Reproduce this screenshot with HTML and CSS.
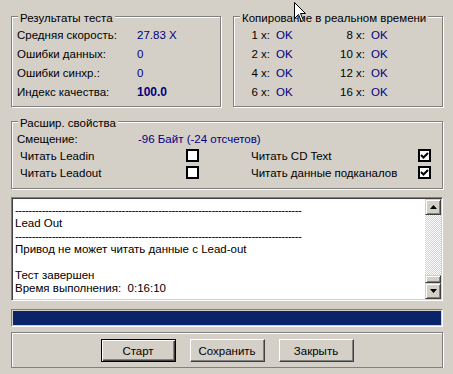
FILE: index.html
```html
<!DOCTYPE html>
<html>
<head>
    <meta charset="utf-8">
    <title>Результаты теста</title>
    <link rel="stylesheet" href="styles.css">
</head>
<body>
    <div class="dialog">
        <div class="top-row">
            <fieldset class="group group-half">
                <legend>Результаты теста</legend>
                <div class="stats">
                    <span>Средняя скорость:</span><span class="val">27.83 X</span>
                    <span>Ошибки данных:</span><span class="val">0</span>
                    <span>Ошибки синхр.:</span><span class="val">0</span>
                    <span>Индекс качества:</span><span class="val val-bold">100.0</span>
                </div>
            </fieldset>
            <fieldset class="group group-half">
                <legend>Копирование в реальном времени</legend>
                <div class="speeds">
                    <span class="spd">1 x:</span><span class="ok">OK</span><span class="spd">8 x:</span><span class="ok">OK</span>
                    <span class="spd">2 x:</span><span class="ok">OK</span><span class="spd">10 x:</span><span class="ok">OK</span>
                    <span class="spd">4 x:</span><span class="ok">OK</span><span class="spd">12 x:</span><span class="ok">OK</span>
                    <span class="spd">6 x:</span><span class="ok">OK</span><span class="spd">16 x:</span><span class="ok">OK</span>
                </div>
            </fieldset>
        </div>

        <fieldset class="group group-full">
            <legend>Расшир. свойства</legend>
            <div class="offset-row">
                <span class="offset-label">Смещение:</span><span class="val">-96 Байт (-24 отсчетов)</span>
            </div>
            <div class="options">
                <span class="opt">Читать Leadin</span><span class="check"></span><span></span>
                <span class="opt opt-right">Читать CD Text</span>
                <span class="check"><svg width="9" height="9" viewBox="0 0 9 9"><path d="M1 4 L3.5 6.5 L8 2" fill="none" stroke="#000" stroke-width="2"/></svg></span>
                <span class="opt">Читать Leadout</span><span class="check"></span><span></span>
                <span class="opt opt-right">Читать данные подканалов</span>
                <span class="check"><svg width="9" height="9" viewBox="0 0 9 9"><path d="M1 4 L3.5 6.5 L8 2" fill="none" stroke="#000" stroke-width="2"/></svg></span>
            </div>
        </fieldset>

        <div class="log">
            <div class="log-text">
                <div class="rule">--------------------------------------------------------------------------------------</div>
                <div>Lead Out</div>
                <div class="rule">--------------------------------------------------------------------------------------</div>
                <div>Привод не может читать данные с Lead-out</div>
                <div>&nbsp;</div>
                <div>Тест завершен</div>
                <div class="keep-spaces">Время выполнения:  0:16:10</div>
            </div>
            <div class="scrollbar">
                <div class="sb-btn"><svg width="7" height="4" viewBox="0 0 7 4"><path d="M3.5 0 L7 4 L0 4 Z" fill="#000"/></svg></div>
                <div class="sb-track"></div>
                <div class="sb-thumb"></div>
                <div class="sb-btn"><svg width="7" height="4" viewBox="0 0 7 4"><path d="M0 0 L7 0 L3.5 4 Z" fill="#000"/></svg></div>
            </div>
        </div>

        <div class="progress"><div class="progress-fill"></div></div>

        <div class="buttons">
            <button class="btn btn-default">Старт</button>
            <button class="btn">Сохранить</button>
            <button class="btn">Закрыть</button>
        </div>
    </div>

    <svg class="cursor" width="13" height="21" viewBox="0 0 13 21">
        <polygon points="0.5,0.5 0.5,16.5 4.5,12.5 7.5,19.5 9.5,18.5 6.5,11.5 11.5,11.5" fill="#fff" stroke="#000" stroke-width="1"/>
    </svg>
</body>
</html>
```

FILE: styles.css
```css
body {
    margin: 0;
    background-color: #d4d0c8;
    font-family: "Liberation Sans", Arial, sans-serif;
    font-size: 11.5px;
    line-height: 14px;
    color: #000;
    overflow: hidden;
}
.dialog {
    width: 432px;
    padding: 7px 10px 0 11px;
}
.top-row {
    display: flex;
    gap: 12px;
}
.group {
    margin: 0;
    min-width: 0;
    padding: 0 5px 5px;
    border: 1px solid #808080;
    box-shadow: 1px 1px 0 #fff, inset 1px 1px 0 #fff;
    box-sizing: border-box;
}
.group legend {
    padding: 4px 2px 0;
    margin-left: 1px;
    background-color: #d4d0c8;
    line-height: 14px;
}
.group-half {
    width: 210px;
}
.group-full {
    width: 432px;
    margin-top: 5px;
    padding-bottom: 7px;
}
.stats {
    display: grid;
    grid-template-columns: 120px 1fr;
    grid-auto-rows: 19px;
    align-items: center;
}
.val {
    color: #000080;
}
.val-bold {
    font-weight: bold;
    font-size: 12px;
}
.speeds {
    display: grid;
    grid-template-columns: 31px 52px 43px 1fr;
    grid-auto-rows: 19px;
    align-items: center;
}
.spd {
    text-align: right;
}
.ok {
    color: #000080;
    padding-left: 6px;
}
.offset-row {
    display: flex;
    align-items: center;
    height: 17px;
}
.offset-label {
    width: 121px;
}
.options {
    display: grid;
    grid-template-columns: 169px 13px 52px 167px 13px;
    grid-auto-rows: 17px;
    align-items: center;
}
.opt {
    padding-left: 3px;
}
.opt-right {
    padding-left: 0;
}
.check {
    width: 13px;
    height: 13px;
    box-sizing: border-box;
    border: 2px solid #000;
    background-color: #fff;
    display: flex;
    align-items: center;
    justify-content: center;
}
.log {
    margin-top: 8px;
    height: 104px;
    box-sizing: border-box;
    display: flex;
    padding: 1px;
    background-color: #fff;
    border: 1px solid;
    border-color: #808080 #fff #fff #808080;
    box-shadow: inset 1px 1px 0 #404040, inset -1px -1px 0 #d4d0c8;
}
.log-text {
    flex: 1;
    overflow: hidden;
    padding: 5px 0 0 2px;
    line-height: 13px;
    white-space: nowrap;
}
.keep-spaces {
    white-space: pre;
}
.rule {
    letter-spacing: -0.5px;
}
.scrollbar {
    width: 16px;
    display: flex;
    flex-direction: column;
}
.sb-btn,
.sb-thumb {
    box-sizing: border-box;
    background-color: #d4d0c8;
    border: 1px solid;
    border-color: #d4d0c8 #404040 #404040 #d4d0c8;
    box-shadow: inset 1px 1px 0 #fff, inset -1px -1px 0 #808080;
}
.sb-btn {
    height: 16px;
    display: flex;
    align-items: center;
    justify-content: center;
}
.sb-thumb {
    height: 8px;
}
.sb-track {
    flex: 1;
    background: repeating-conic-gradient(#d4d0c8 0 25%, #fff 0 50%) 0 0 / 2px 2px;
}
.progress {
    margin-top: 8px;
    height: 18px;
    box-sizing: border-box;
    padding: 1px;
    border: 1px solid;
    border-color: #808080 #fff #fff #808080;
}
.progress-fill {
    height: 100%;
    background-color: #0a246a;
}
.buttons {
    margin-top: 5px;
    display: flex;
    justify-content: center;
    gap: 14px;
    padding: 6px 0 5px;
    border: 1px solid #808080;
    box-shadow: 1px 1px 0 #fff, inset 1px 1px 0 #fff;
}
.btn {
    width: 75px;
    height: 23px;
    padding: 0;
    font: inherit;
    color: #000;
    background-color: #d4d0c8;
    border: 1px solid;
    border-color: #fff #404040 #404040 #fff;
    box-shadow: inset -1px -1px 0 #808080;
}
.btn-default {
    border-color: #000;
    box-shadow: inset 1px 1px 0 #fff, inset -1px -1px 0 #404040, inset -2px -2px 0 #808080;
}
.cursor {
    position: absolute;
    left: 294px;
    top: 2px;
}
```
